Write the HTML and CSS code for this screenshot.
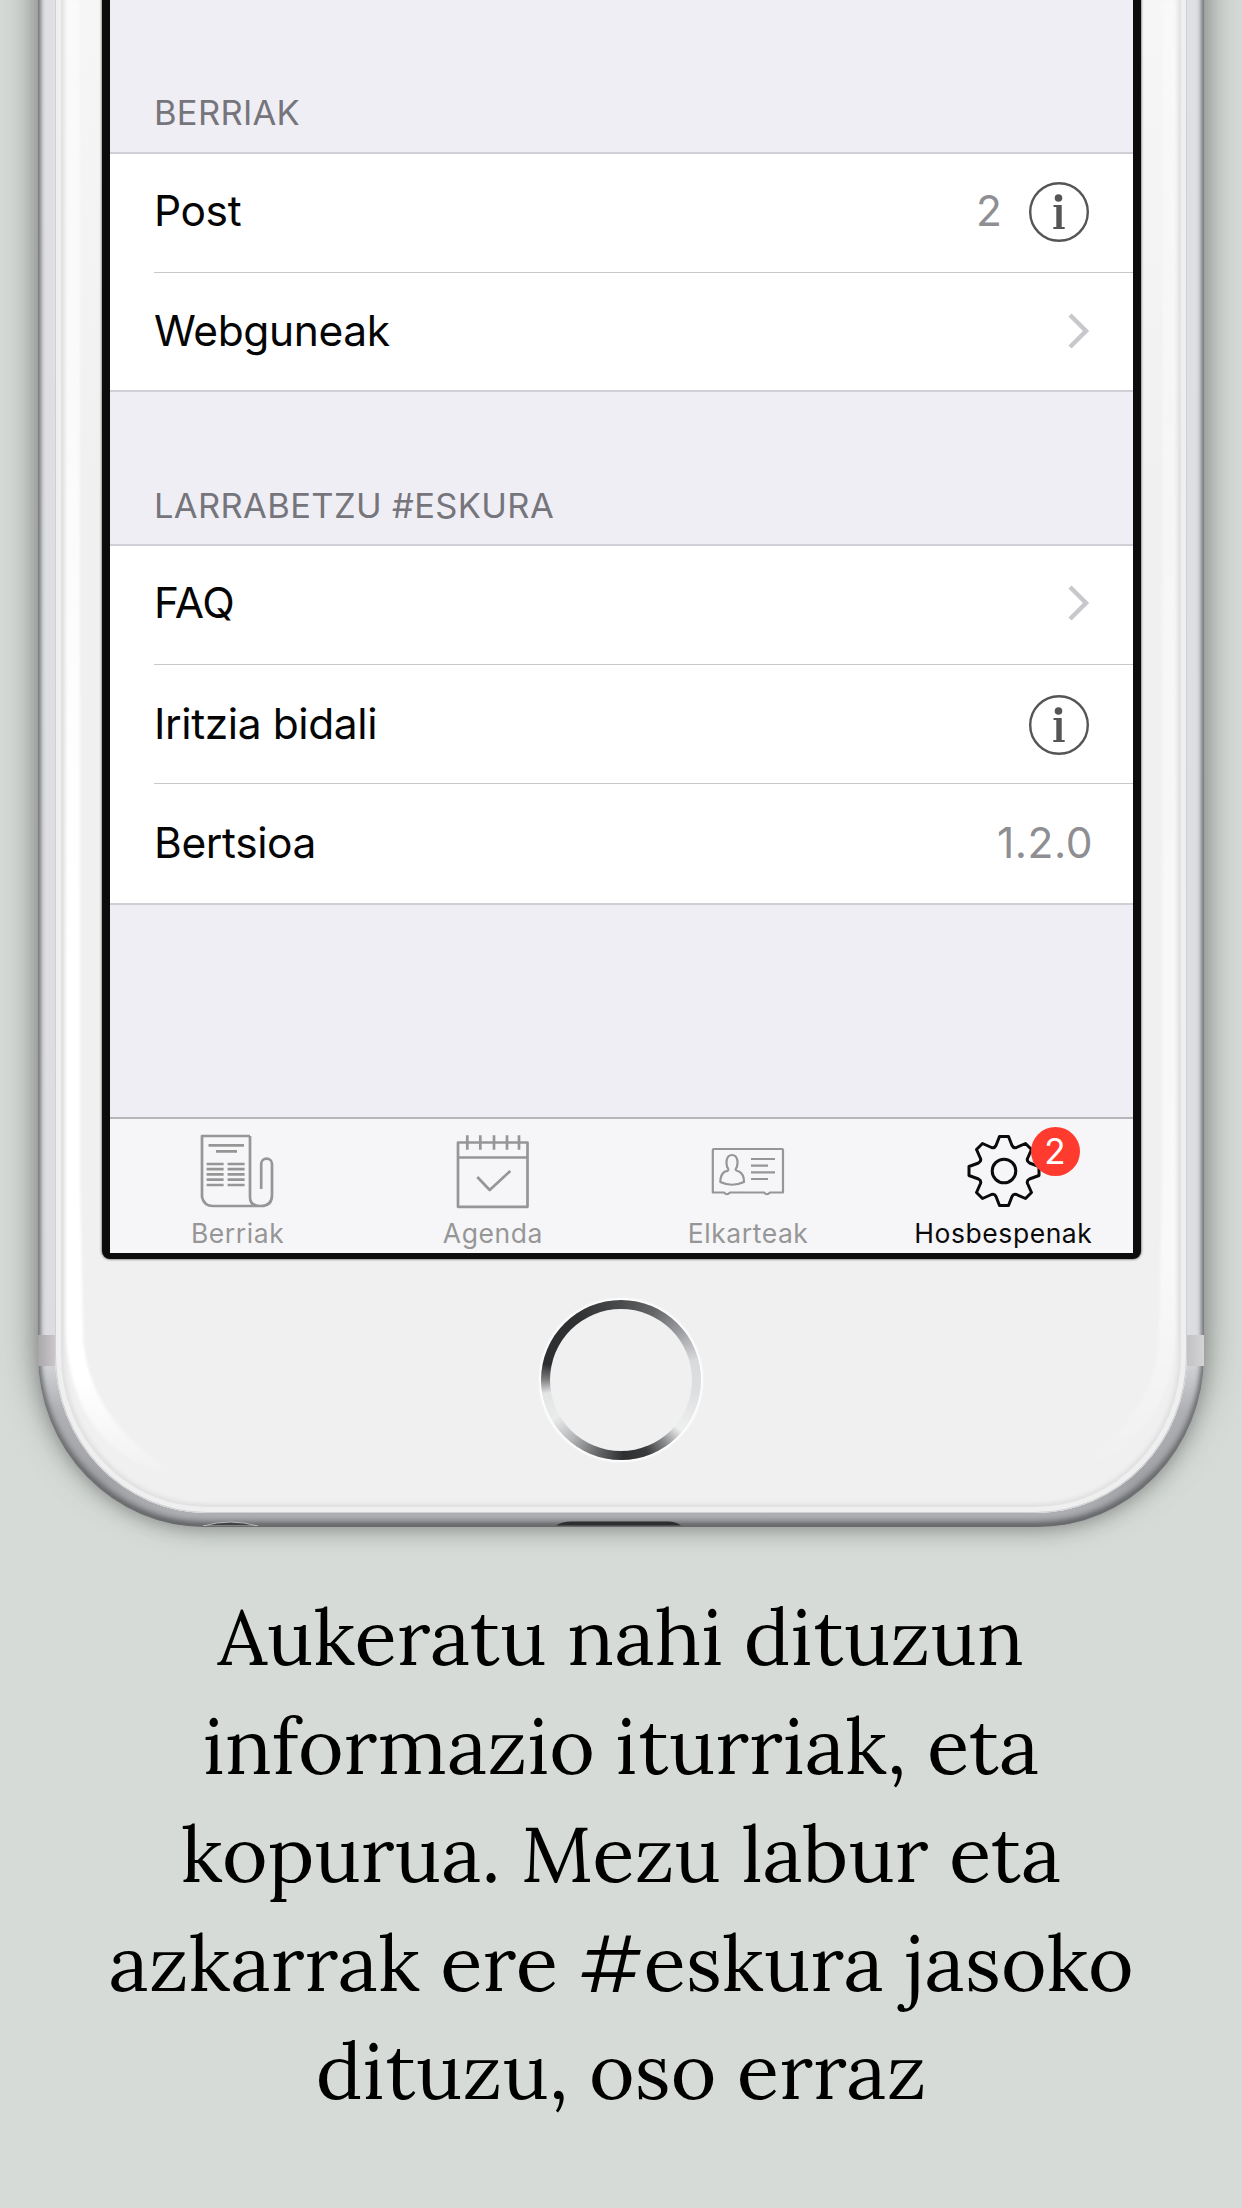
FILE: index.html
```html
<!DOCTYPE html>
<html lang="eu">
<head>
<meta charset="utf-8">
<title>Larrabetzu #eskura</title>
<link rel="stylesheet" href="styles.css">
</head>
<body>
<main class="poster">
  <section class="phone">
    <i class="antenna antenna-left"></i><i class="antenna antenna-right"></i>
    <div class="face">
      <svg class="gleam" viewBox="0 0 1132 1513" aria-hidden="true">
        <defs>
          <linearGradient id="gl" x1="0" y1="0" x2="0" y2="1"><stop offset="0" stop-color="#fff" stop-opacity=".4"/><stop offset=".65" stop-color="#fff"/><stop offset=".93" stop-color="#fff"/><stop offset="1" stop-color="#fff" stop-opacity="0"/></linearGradient>
          <linearGradient id="gr" x1="0" y1="0" x2="0" y2="1"><stop offset="0" stop-color="#fff" stop-opacity=".3"/><stop offset=".85" stop-color="#fff" stop-opacity=".6"/><stop offset="1" stop-color="#fff" stop-opacity="0"/></linearGradient>
        </defs>
        <path fill="url(#gl)" d="M11 0V1330C13 1410 50 1465 135 1481C75 1450 29 1400 28 1330L25 1180V0Z"/>
        <path fill="url(#gr)" d="M1121 0V1330C1119 1410 1080 1465 985 1481C1060 1450 1104 1400 1104 1330L1107 1180V0Z"/>
      </svg>
      <div class="screen">
        <h2 class="group-title">BERRIAK</h2>
        <div class="group">
          <div class="row"><span class="label">Post</span><span class="value">2</span>
            <svg class="info" viewBox="0 0 62 62"><circle cx="31" cy="31" r="28.8"/><circle class="solid" cx="30.5" cy="17" r="3.8"/><path class="solid" d="M25.5 24h8.2v22h3v2h-11.4v-2h3V26h-2.8z"/></svg></div>
          <div class="row"><span class="label">Webguneak</span><svg class="chevron" viewBox="0 0 22 36"><path d="M2 2L18 18L2 34"/></svg></div>
        </div>
        <h2 class="group-title second">LARRABETZU #ESKURA</h2>
        <div class="group">
          <div class="row"><span class="label">FAQ</span><svg class="chevron" viewBox="0 0 22 36"><path d="M2 2L18 18L2 34"/></svg></div>
          <div class="row"><span class="label">Iritzia bidali</span>
            <svg class="info" viewBox="0 0 62 62"><circle cx="31" cy="31" r="28.8"/><circle class="solid" cx="30.5" cy="17" r="3.8"/><path class="solid" d="M25.5 24h8.2v22h3v2h-11.4v-2h3V26h-2.8z"/></svg></div>
          <div class="row"><span class="label">Bertsioa</span><span class="value version">1.2.0</span></div>
        </div>
        <nav class="tabs">
          <div class="tab"><svg class="news" viewBox="0 0 76 76"><path d="M51 3H3V64Q5 73 14 73H62Q73 73 73 62V31A5.4 5.4 0 0 0 62.2 31V56M51 3V64Q51 73 61 73M9.5 12.3H45M17 18.3H38M7.6 31h17M7.6 36.2h17M7.6 41.4h17M7.6 46.6h17M7.6 52h17M28.6 31h17M28.6 36.2h17M28.6 41.4h17M28.6 46.6h17M28.6 52h17"/></svg><span>Berriak</span></div>
          <div class="tab"><svg viewBox="0 0 76 76"><path d="M3 9.5H72.5V73.8H3ZM3 24.5H72.5M12.3 2.3V16.7M25.3 2.3V16.7M39 2.3V16.7M52 2.3V16.7M64 2.3V16.7M22.3 44L34.7 57L55.3 38"/></svg><span>Agenda</span></div>
          <div class="tab tab-card"><svg viewBox="0 0 76 76"><path d="M4 16H72Q73 16 73 17V59.500H60Q57 63 54 59.500H20Q17 63 14 59.500H2.800V17Q2.800 16 4 16ZM18.500 36.500C15 31 16 22 22 22S29 31 25.500 36.500Q26 38 29 38.500Q34 41 34 49Q22 54.500 10.300 49Q10.500 41 15 38.500Q18.500 38 18.500 36.500M41 26H65M41 32.700H58M41 39.300H65M41 46H58"/></svg><span>Elkarteak</span></div>
          <div class="tab active"><svg viewBox="-38 -38 76 76"><path d="M-4.500 -34.500H4.500L8 -25.500Q9.500 -22.500 12.500 -23.500L21.500 -27.500L27.500 -21.500L23.500 -12.500Q22.500 -9.500 25.500 -8L35 -4.500V4.500L25.500 8Q22.500 9.500 23.500 12.500L27.500 21.500L21.500 27.500L12.500 23.500Q9.500 22.500 8 25.500L4.500 34.500H-4.500L-8 25.500Q-9.500 22.500 -12.500 23.500L-21.500 27.500L-27.500 21.500L-23.500 12.500Q-22.500 9.500 -25.500 8L-35 4.500V-4.500L-25.500 -8Q-22.500 -9.500 -23.500 -12.500L-27.500 -21.500L-21.500 -27.500L-12.500 -23.500Q-9.500 -22.500 -8 -25.500Z"/><circle r="11.800"/></svg><span>Hosbespenak</span><b class="badge">2</b></div>
        </nav>
      </div>
      <div class="home"><div class="home-inner"></div></div>
    </div>
    <svg class="ports" viewBox="0 0 1166 16" aria-hidden="true"><path d="M165 16Q192 8 220 16Z" fill="#424345" stroke="#bbb"/><path d="M518 15.500Q524 11.500 534 11.500H630Q638 11.500 643 15.500Z" fill="#2d2e30"/></svg>
  </section>
  <p class="caption">
    <span>Aukeratu nahi dituzun</span>
    <span>informazio iturriak, eta</span>
    <span>kopurua. Mezu labur eta</span>
    <span>azkarrak ere #eskura jasoko</span>
    <span>dituzu, oso erraz</span>
  </p>
</main>
</body>
</html>
```
FILE: styles.css
```css
* { box-sizing: border-box; }
body { margin: 0; background: #d6dbd7; }
.poster { display: flow-root; width: 1242px; height: 2208px; overflow: hidden; font-family: Inter, "Liberation Sans", sans-serif; }

/* device: the top runs off the poster */
.phone {
  position: relative; height: 1567px; margin: -40px 38px 0; padding: 0 17px 14px;
  border-radius: 0 0 167px 167px / 0 0 172px 172px;
  background: linear-gradient(#dfe0e4 0, #dcdde1 1390px, #b0b1b5 1450px, #a2a3a7 1520px, #b4b5b8 1567px);
  box-shadow: inset 3px 0 4px -1px #75767a, inset -3px 0 4px -1px #75767a, inset 0 -5px 7px #58595c, 0 -14px 36px rgba(75,77,75,.7), 0 10px 18px -6px rgba(70,72,70,.35);
}
.face {
  position: relative; height: 1553px; padding: 40px 47px 0;
  border-radius: 0 0 152px 152px / 0 0 158px 158px;
  background: linear-gradient(#f7f7f7, #f0f0f0 540px, #f0f0f0);
  box-shadow: inset 0 0 0 1px #d0d0d3, inset 0 0 0 6px #f0eff0, inset 0 0 4px 9px #dfdfe1;
}
.gleam { position: absolute; left: 0; top: 40px; width: 1132px; height: 1513px; filter: blur(1.500px); }
.antenna { position: absolute; top: 1375px; width: 17px; height: 31px; }
.antenna-left { left: 0; background: linear-gradient(90deg, #aaa7aa, #cac6c9); }
.antenna-right { right: 0; background: linear-gradient(90deg, #c2c2c4, #d4d4d6); }
.ports { position: absolute; left: 0; bottom: 1px; width: 1166px; height: 16px; }

/* screen */
.screen {
  position: relative; width: 1039px; height: 1259px;
  display: flex; flex-direction: column;
  border: 8px solid #0c0c0c; border-top: 0; border-bottom-width: 6px; border-radius: 0 0 8px 8px;
  background: #efeef5; box-shadow: 0 0 2px 1px #999;
}
.group-title {
  margin: 0; padding: 92px 0 0 44px; height: 152px; line-height: 42px;
  font-size: 34.500px; font-weight: 400; color: #75757b; letter-spacing: .3px; white-space: nowrap;
}
.group-title.second { padding-top: 93px; letter-spacing: .35px; }
.group { background: #fff; border-top: 2px solid #d0cfd5; border-bottom: 2px solid #d0cfd5; }
.row { display: flex; align-items: center; height: 119.500px; margin-left: 44px; padding-right: 44px; }
.row:first-child { height: 117.500px; padding-bottom: 3.500px; }
.row + .row { border-top: 1.500px solid #c8c7cc; }
.row:nth-child(2):last-child { height: 118.500px; }
.label { flex: 1; font-size: 42.500px; line-height: 56px; color: #050505; letter-spacing: -.4px; }
.value { font-size: 42.500px; line-height: 56px; color: #8e8e93; }
.version { margin-right: -4px; letter-spacing: .5px; }
.info { width: 62px; height: 62px; margin: 2px -1px 0 26px; fill: none; stroke: #555; stroke-width: 2.400; }
.solid { fill: #555; stroke: none; }
.chevron { width: 22px; height: 36px; margin-right: -1px; fill: none; stroke: #c7c7cc; stroke-width: 4.500; }

/* tab bar */
.tabs { display: flex; height: 136px; margin-top: auto; border-top: 2px solid #b5b5ba; background: #f6f6f9; }
.tab { position: relative; flex: 1; display: flex; flex-direction: column; align-items: center; padding-top: 14px; color: #969696; font-size: 26.500px; line-height: 32px; letter-spacing: .55px; }
.tab svg { width: 76px; height: 76px; flex: none; margin-bottom: 8px; fill: none; stroke: currentColor; stroke-width: 2.700; stroke-linejoin: round; }
.tab .news { margin-right: 2px; }
.tab.tab-card svg { stroke-width: 2.200; }
.tab.active { color: #0a0a0a; padding-right: 2px; }
.tab.active svg { stroke-width: 3; margin-right: -1px; }
.badge { position: absolute; left: 155px; top: 8px; width: 49px; height: 49px; border-radius: 50%; background: #ff3b30; color: #fff; font-size: 35px; font-weight: 400; line-height: 49px; text-align: center; }

/* home button */
.home {
  width: 160px; height: 160px; margin: 41px 0 0 439px; padding: 9px; border-radius: 50%;
  background: conic-gradient(#4a4b4d, #626466 25deg, #9a9c9f 50deg, #d8dadc 75deg, #dddfe1 100deg, #eef0f0 130deg, #8a8c8e 145deg, #3a3b3d 160deg, #2e2f31 178deg, #66686a 198deg, #b5b7b9 220deg, #eaecec 240deg, #e2e4e5 260deg, #77797b 271deg, #2d2e30 282deg, #303133 325deg, #4a4b4d);
  box-shadow: 0 0 2px 2px #fff;
}
.home-inner { height: 142px; border-radius: 50%; background: #f0f0f0; }

/* caption */
.caption {
  margin: 56px 0 0; color: #000; text-align: center; white-space: nowrap;
  font-family: Lora, "Liberation Serif", serif; font-size: 78px; line-height: 108.600px;
}
.caption span { display: block; }
```
